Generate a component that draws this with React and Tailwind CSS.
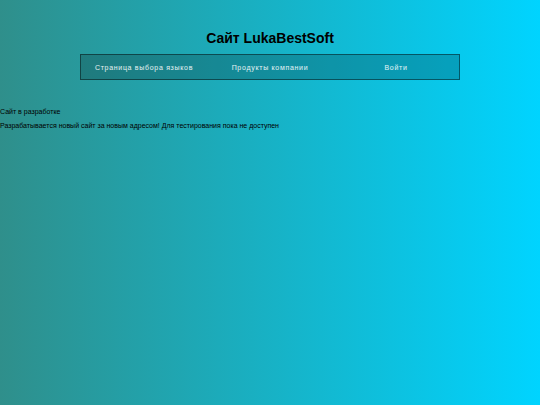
const links = ["Страница выбора языков", "Продукты компании", "Войти"];

export default function App() {
  return (
    <div className="min-h-screen bg-[linear-gradient(90deg,#2f8f8b_0%,#00d4ff_100%)] pt-7 font-['Liberation_Sans',Arial,sans-serif] text-[7px] leading-[8px] text-black">
      <header className="flex flex-col items-center">
        <h1 className="text-[14px] leading-[20px] font-bold">Сайт LukaBestSoft</h1>
        <nav className="mt-[6px] w-[380px] max-w-full border border-black/45 bg-black/20">
          <ul className="grid grid-cols-3">
            {links.map((label) => (
              <li key={label}>
                <a href="#" className="block pt-[9px] pb-[7px] text-center tracking-widest text-white/90">
                  {label}
                </a>
              </li>
            ))}
          </ul>
        </nav>
      </header>
      <main className="mt-7">
        <p>Сайт в разработке</p>
        <p className="mt-[6px]">
          Разрабатывается новый сайт за новым адресом! Для тестирования пока не доступен
        </p>
      </main>
    </div>
  );
}
